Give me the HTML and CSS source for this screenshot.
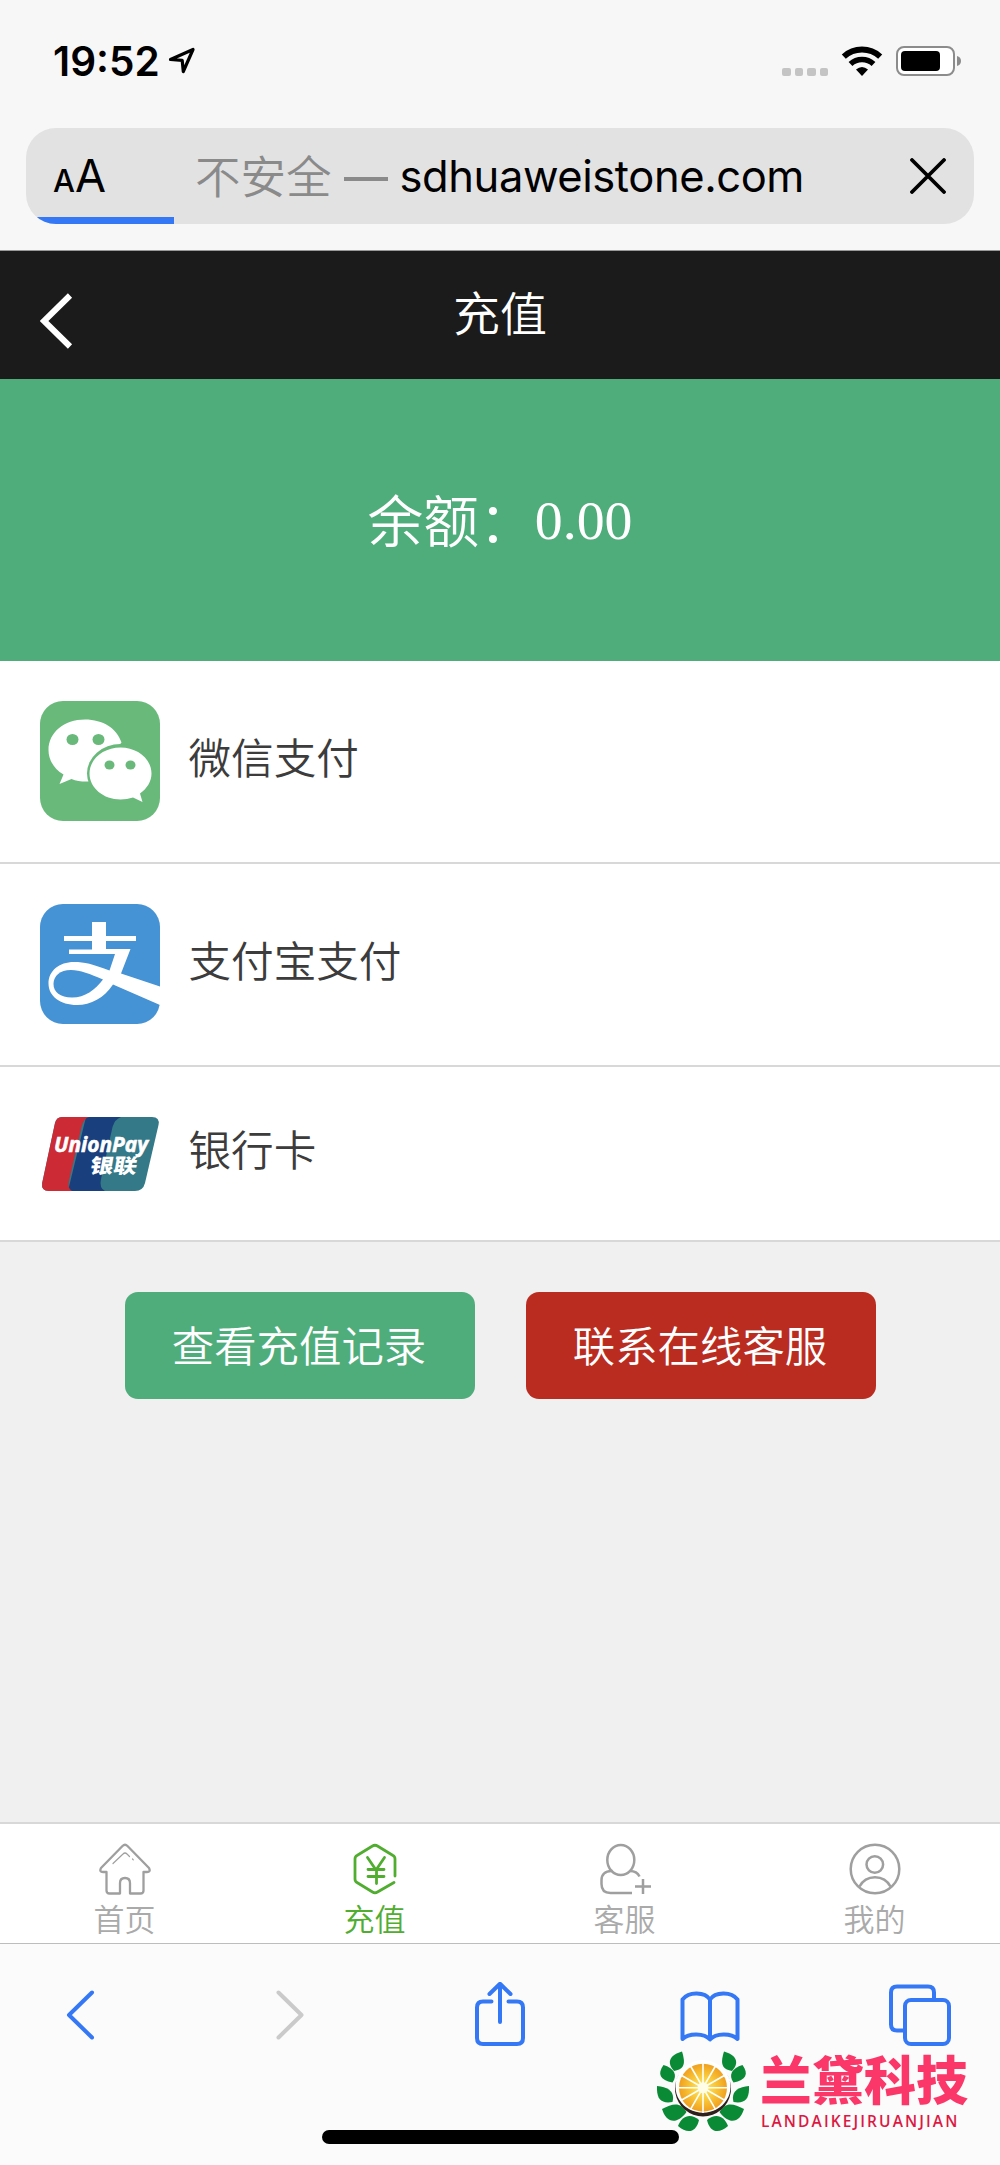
FILE: index.html
```html
<!DOCTYPE html>
<html lang="zh-CN">
<head>
<meta charset="utf-8">
<title>充值</title>
<link rel="stylesheet" href="styles.css">
</head>
<body>
<div class="phone">
  <header class="browser-top">
    <div class="status">
      <span class="time">19:52</span>
      <svg class="location" width="28" height="28" viewBox="0 0 28 28"><path d="M2.500 12.500 25 2.500 15.300 24.500 14.200 13.300Z" fill="none" stroke="#000" stroke-width="3.200" stroke-linejoin="round"/></svg>
      <span class="dots"><i></i><i></i><i></i><i></i></span>
      <svg class="wifi" width="42" height="30" viewBox="0 0 42 30">
        <path d="M2.800 10.600a27 27 0 0 1 36.400 0" fill="none" stroke="#000" stroke-width="6"/>
        <path d="M9.500 18a17 17 0 0 1 23 0" fill="none" stroke="#000" stroke-width="5.600"/>
        <path d="M15 23.500q6-5 12 0l-6 6.500z"/>
      </svg>
      <svg class="battery" width="66" height="30" viewBox="0 0 66 30">
        <rect x="1" y="1" width="57" height="28" rx="7" fill="#fff" stroke="#8c8c8c" stroke-width="2"/>
        <rect x="5" y="5" width="39" height="20" rx="4"/>
        <path d="M61 10q4 1 4 5t-4 5z" fill="#8c8c8c"/>
      </svg>
    </div>
    <div class="address">
      <span class="aa"><small>A</small>A</span>
      <div class="url"><span class="insecure">不安全</span><span class="dash"></span><span class="domain">sdhuaweistone.com</span></div>
      <svg class="stop" width="36" height="36" viewBox="0 0 36 36"><path d="M2 2 34 34M34 2 2 34" stroke="#000" stroke-width="3.800" stroke-linecap="round"/></svg>
      <span class="progress"></span>
    </div>
  </header>

  <nav class="title-bar">
    <svg class="back" width="34" height="56" viewBox="0 0 34 56"><path d="M30 2.500 4 28 30 53.500" fill="none" stroke="#fff" stroke-width="6"/></svg>
    <h1>充值</h1>
  </nav>

  <section class="balance"><span>余额：</span><span class="amount">0.00</span></section>

  <main>
    <ul class="methods">
      <li class="method">
        <svg width="120" height="120" viewBox="0 0 120 120">
          <rect width="120" height="120" rx="23" fill="#68b97a"/>
          <path d="M45 18.500C24 18.500 8.500 31.500 8.500 49c0 10 5.500 19 15 24.500L19.500 83l12-5c5 2 11 2.800 17 2.500l33-39C77 27.500 63 18.500 45 18.500Z" fill="#fff"/>
          <ellipse cx="80.500" cy="72.500" rx="33.500" ry="29.500" fill="#68b97a"/>
          <path d="M80.500 46.500c-17 0-31 11.500-31 26s14 26 31 26c4.500 0 8.500-.8 12.500-2l9.500 4.500-2.500-8.500c7-5 11.500-12 11.500-20 0-14.500-14-26-31-26Z" fill="#fff"/>
          <g fill="#68b97a"><ellipse cx="32.500" cy="38.500" rx="6" ry="5.500"/><ellipse cx="58.500" cy="38.500" rx="6" ry="5.500"/><ellipse cx="69.500" cy="64" rx="5" ry="4.500"/><ellipse cx="90.500" cy="64" rx="5" ry="4.500"/></g>
        </svg>
        <span>微信支付</span>
      </li>
      <li class="method">
        <svg width="120" height="120" viewBox="0 0 120 120">
          <rect width="120" height="120" rx="23" fill="#4592d4"/>
          <path d="M52 18h14v14h30v5H66v8h24.500L81 69.500l39 13V101L73 80.500C64 94 51 101 37 101 20 101 8.500 92 8.500 79.500S19 58 34 58c11 0 18 2 35.500 8.500L75 50H29v-4.500h23V37H24v-5h28Z" fill="#fff"/>
          <path d="M63 75.500C50 70 40 66 31 66c-11 0-17.500 6-17.500 14S20 93.500 32 93.500C45 93.500 55 86 63 75.500Z" fill="#4592d4"/>
        </svg>
        <span>支付宝支付</span>
      </li>
      <li class="method bank">
        <svg width="120" height="76" viewBox="0 0 120 76">
          <path d="M22 1H112q8 0 6.500 8L105 67q-2 8-10 8H9q-8 0-6.800-8L15 7q1.500-6 7-6Z" fill="#337988"/>
          <path d="M46 1h35q-6 2-8.500 10L61 63q-2 9 4 12H28Z" fill="#193f7c"/>
          <path d="M22 1h27q-5 1-7.500 10L29 65q-2 7 3 10H9q-8 0-6.800-8L15 7q1.500-6 7-6Z" fill="#cc2a34"/>
          <text class="up-latin" x="14" y="36" textLength="94" lengthAdjust="spacingAndGlyphs">UnionPay</text>
          <text class="up-han" transform="translate(49 57) skewX(-10)" textLength="47" lengthAdjust="spacingAndGlyphs">银联</text>
        </svg>
        <span>银行卡</span>
      </li>
    </ul>
    <div class="actions">
      <button class="btn btn-records">查看充值记录</button>
      <button class="btn btn-service">联系在线客服</button>
    </div>
  </main>

  <nav class="tabs">
    <a class="tab">
      <svg width="52" height="52" viewBox="0 0 52 52" fill="none" stroke="#9f9f9f" stroke-width="2.300" stroke-linejoin="round" stroke-linecap="round">
        <path d="M23.500 3q2.500-2.500 5 0L50 25q2 4-2 4h-3.500v18.500q0 3-3 3H31V40q0-5-5-5t-5 5v10.500H10.500q-3 0-3-3V29H4q-4 0-2-4Z"/>
        <path d="M14 20.500 24 11q2-2 4 0l2.500 2.500M33.500 16l.8.800" stroke-width="1.200"/>
      </svg>
      <span>首页</span>
    </a>
    <a class="tab active">
      <svg width="52" height="52" viewBox="0 0 52 52" fill="none" stroke="#51ad30" stroke-width="2.800" stroke-linecap="round" stroke-linejoin="round">
        <path d="M46 33V16q0-2.500-2-3.500L28.500 3q-2.500-1.500-5 0L8 12.500q-2 1-2 3.500v20q0 2.500 2 3.500l15.500 9.500q2.500 1.500 5 0L45 39.500"/>
        <path d="M18.500 14.500 27 27 35.500 14.500M19 26.500h16M19 33.500h16M27.500 27v13.500"/>
      </svg>
      <span>充值</span>
    </a>
    <a class="tab">
      <svg width="52" height="52" viewBox="0 0 52 52" fill="none" stroke="#9f9f9f" stroke-width="2.500">
        <ellipse cx="21.800" cy="17" rx="13.500" ry="15"/>
        <path d="M13.500 28C6 27.500 2.500 32 2.500 37v4q0 9 9 9H33M31 28q7 0 9.500 5.500M36 43.500h16M44 36v15"/>
      </svg>
      <span>客服</span>
    </a>
    <a class="tab">
      <svg width="52" height="52" viewBox="0 0 52 52" fill="none" stroke="#9f9f9f" stroke-width="2.500">
        <circle cx="26" cy="26" r="24.300"/><circle cx="25.800" cy="21.500" r="8.300"/><path d="M10.500 43.500C17 31 35 31 41.500 43.500"/>
      </svg>
      <span>我的</span>
    </a>
  </nav>

  <footer class="toolbar">
    <svg width="64" height="64" viewBox="0 0 64 64"><path d="M44 10.500 21 33 44 55.500"/></svg>
    <svg class="disabled" width="64" height="64" viewBox="0 0 64 64"><path d="M20.500 10.500 43.500 33 20.500 55.500"/></svg>
    <svg width="64" height="64" viewBox="0 0 64 64"><path d="M23.500 19.500H15q-6 0-6 6V56q0 6 6 6h34q6 0 6-6V25.500q0-6-6-6h-8.500M32 40V2.500M21.500 12 32 1.800 42.500 12"/></svg>
    <svg width="64" height="64" viewBox="0 0 64 64"><path d="M32 17.500C27 10 11 9 4.500 17.500V57C11 51 26 51 32 57.500 38 51 53 51 59.500 57V17.500C53 9 37 10 32 17.500V57"/></svg>
    <svg width="64" height="64" viewBox="0 0 64 64"><rect x="17" y="18" width="44" height="44" rx="6"/><path d="M16.500 48.500H9q-6 0-6-6V10.500q0-6 6-6h31q6 0 6 6V17"/></svg>
    <span class="home-indicator"></span>
    <div class="brand">
      <svg width="92" height="84" viewBox="0 0 92 84">
        <defs>
          <radialGradient id="pulp"><stop offset="0" stop-color="#fdee6a"/><stop offset=".5" stop-color="#f9ca3b"/><stop offset="1" stop-color="#f0a01f"/></radialGradient>
          <g id="leaves" fill="#0b8a35">
            <path d="M25 1.500C13 5 9 12 17 21 28 19 28.500 13 25 1.500Z"/>
            <path d="M6.500 15C0 24 3 30 15.500 32.500 21 25 17 18 6.500 15Z"/>
            <path d="M0 36C-.5 48 3 54 15.500 52 18 42 12 37 0 36Z"/>
            <path d="M5 59C9 72 19 76 29.500 62 24 52 16 53 5 59Z"/>
            <path d="M21 76C30 84 39 83 42 70 34 63 25 65 21 76Z"/>
          </g>
        </defs>
        <use href="#leaves"/>
        <use href="#leaves" transform="translate(92 0) scale(-1 1)"/>
        <circle cx="46" cy="38" r="28" fill="#fff"/>
        <path d="M22 24A28 28 0 1 0 70 24 27.500 26 0 1 1 22 24Z" fill="#2e211c"/>
        <circle cx="46" cy="37.700" r="24" fill="url(#pulp)"/>
        <path d="M46 13v50M21 37.700h50M33.500 16l25 43.400M24.300 25.200l43.400 25M58.500 16l-25 43.400M67.700 25.200l-43.400 25" stroke="#fff" stroke-width="1.600"/>
        <circle cx="46" cy="37.700" r="5.500" fill="#fffde6"/>
      </svg>
      <div class="brand-text">
        <span class="brand-han">兰黛科技</span>
        <span class="brand-latin">LANDAIKEJIRUANJIAN</span>
      </div>
    </div>
  </footer>
</div>
</body>
</html>
```
FILE: styles.css
```css
* { box-sizing: border-box; }
body { margin: 0; background: #f0f0f0; font-family: "Noto Sans CJK SC", sans-serif; }
svg { display: block; flex: none; }
.phone { width: 1000px; height: 2165px; display: flex; flex-direction: column; overflow: hidden; }

.browser-top { height: 251px; background: #f7f7f7; padding: 37px 26px 0; border-bottom: 1px solid #999; }
.status { height: 48px; display: flex; align-items: center; padding: 0 12px 0 27px; }
.time { font: 600 40.500px/48px Inter, sans-serif; width: 115px; padding-top: 1px; white-space: nowrap; }
.location { margin-top: -1px; }
.dots { display: flex; gap: 4px; margin-left: auto; align-self: flex-end; padding-bottom: 9px; }
.dots i { width: 8.400px; height: 8.400px; border-radius: 2px; background: #c4c4c4; }
.wifi { margin: 0 13px 0 13px; }
.address { position: relative; height: 96px; margin-top: 43px; background: #e2e2e3; border-radius: 30px; overflow: hidden; display: flex; align-items: center; padding: 0 28px 0 27px; }
.aa { font: 400 45px/60px Inter, sans-serif; width: 142px; padding-top: 4px; }
.aa small { font-size: 31px; font-weight: 500; }
.url { display: flex; align-items: center; font-size: 45.500px; line-height: 60px; white-space: nowrap; }
.insecure { color: #8a8a8a; font-weight: 350; margin-top: -5px; }
.dash { width: 44px; height: 4px; background: #8a8a8a; margin: 6px 12px 0 12px; }
.domain { font: 400 43.500px/60px Inter, sans-serif; letter-spacing: -0.420px; }
.stop { margin-left: auto; }
.progress { position: absolute; left: 0; bottom: 0; width: 148px; height: 7px; background: #3478f6; }

.title-bar { height: 128px; background: #1b1b1b; display: grid; grid-template-columns: 100px 1fr 100px; align-items: center; }
.back { margin: 12px 0 0 40px; }
.title-bar h1 { margin: -8px 0 0; text-align: center; color: #fff; font-size: 47px; font-weight: 350; line-height: 60px; }

.balance { height: 282px; background: #4fad7b; color: #fff; display: flex; align-items: center; justify-content: center; padding-bottom: 5px; font-size: 55.800px; font-weight: 350; line-height: 80px; }
.amount { font-family: "Liberation Serif", serif; padding-top: 5px; }

main { flex: 1; }
.methods { list-style: none; margin: 0; padding: 0; background: #fff; }
.method { height: 203px; border-bottom: 2px solid #d8d8d8; display: flex; align-items: center; gap: 28.500px; padding: 0 0 2px 40px; color: #3c3c3c; font-size: 42.600px; font-weight: 350; line-height: 60px; }
.method span { margin-top: -10px; }
.bank { height: 175px; padding-bottom: 0; }
.bank span { margin-top: -11px; }
.up-latin { font: italic 700 22px "Open Sans", sans-serif; fill: #fff; stroke: #fff; stroke-width: .600px; }
.up-han { font: 900 20px "Noto Sans CJK SC", sans-serif; fill: #fff; }
.actions { display: flex; justify-content: center; gap: 51px; padding-top: 50px; }
.btn { width: 350px; height: 107px; border: 0; border-radius: 13px; padding: 0 1px 4px 0; color: #fff; font: 350 42.400px/103px "Noto Sans CJK SC", sans-serif; }
.btn-records { background: #4fad7b; }
.btn-service { background: #bb2c20; }

.tabs { height: 121px; background: #fff; border-top: 2px solid #d8d8d8; display: grid; grid-template-columns: repeat(4, 1fr); }
.tab { display: flex; flex-direction: column; align-items: center; padding: 19px 1px 0 0; color: #aaa; font-size: 31px; font-weight: 350; line-height: 46px; }
.tab.active { color: #51ad30; }

.toolbar { position: relative; height: 222px; background: #fbfbfb; border-top: 1px solid #bdbdbd; display: flex; justify-content: space-between; align-items: flex-start; padding: 38px 48px 0; }
.toolbar > svg { fill: none; stroke: #3478f6; stroke-width: 4; stroke-linecap: round; stroke-linejoin: round; }
.toolbar > svg.disabled { stroke: #cacaca; }
.home-indicator { position: absolute; left: 322px; bottom: 21px; width: 357px; height: 14px; border-radius: 7px; background: #000; }
.brand { position: absolute; left: 657px; top: 106px; display: flex; gap: 11px; }
.brand-text { display: flex; flex-direction: column; white-space: nowrap; }
.brand-han { margin-top: 1px; font: 900 52px/54px "Noto Sans CJK SC", sans-serif; color: #fb3769; }
.brand-latin { margin-top: 5px; font: 600 15.500px/22px "Open Sans", sans-serif; letter-spacing: 2.100px; color: #dc1843; padding-left: 1px; }
```
